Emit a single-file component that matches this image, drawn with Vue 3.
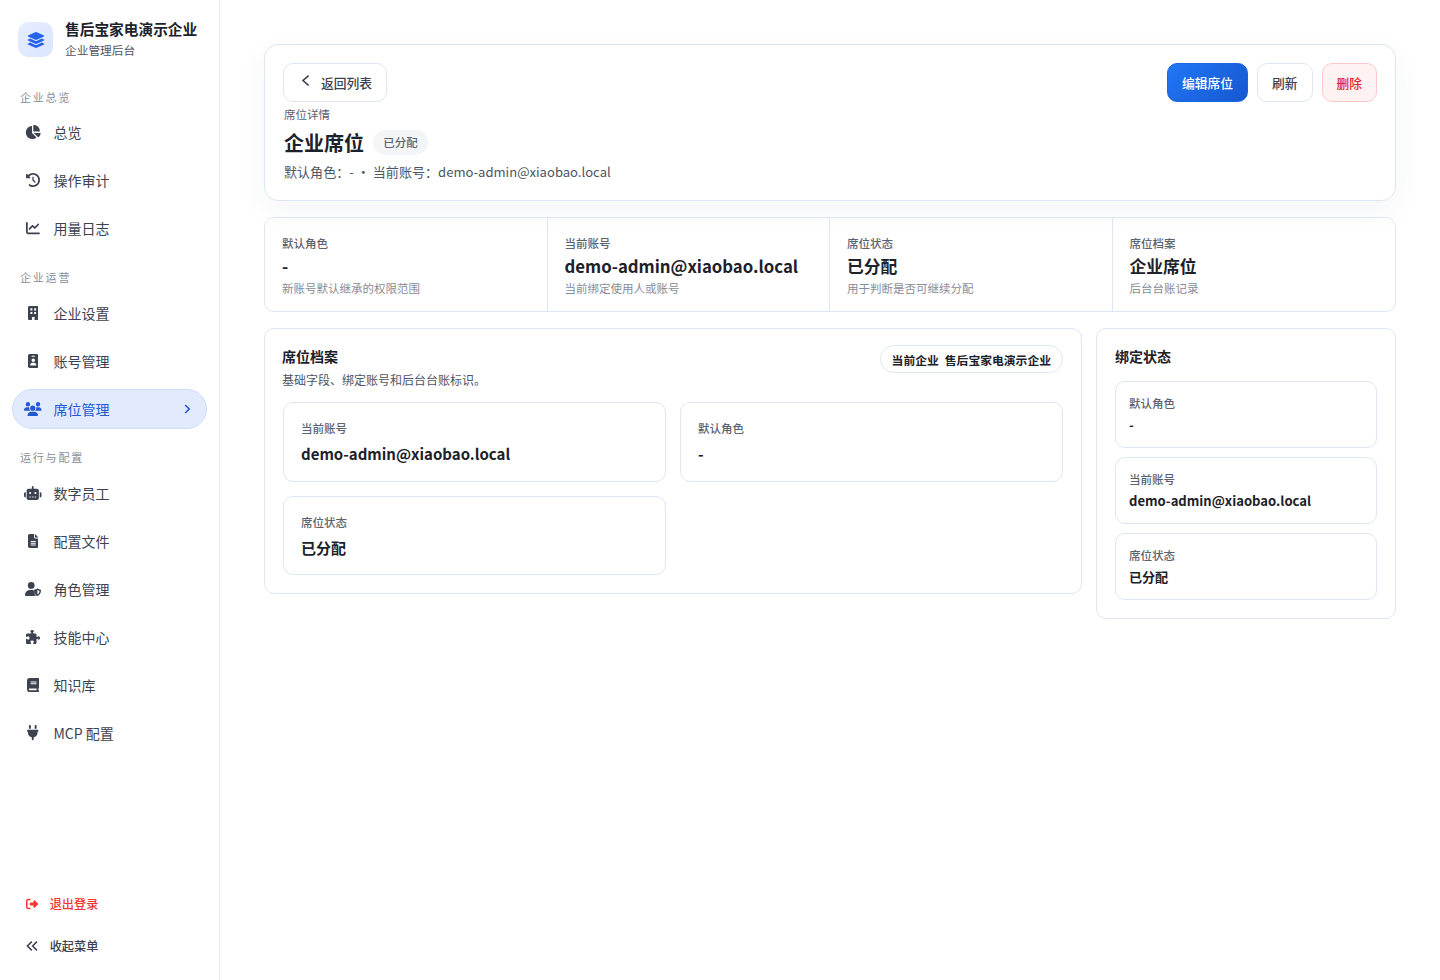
<template>
  <div class="layout">
    <aside class="sidebar">
      <div class="brand">
        <div class="brand-logo">
          <svg viewBox="0 0 576 512" class="logo-icon"><path :d="icons.layers.d" /></svg>
        </div>
        <div>
          <div class="brand-name">售后宝家电演示企业</div>
          <div class="brand-sub">企业管理后台</div>
        </div>
      </div>

      <div v-for="group in groups" :key="group.label" class="nav-group">
        <div class="nav-label">{{ group.label }}</div>
        <div v-for="item in group.items" :key="item.text" class="nav-item" :class="{ active: item.active }">
          <span class="nav-icon">
            <svg :viewBox="item.icon.vb" :style="{ width: item.icon.w + 'px' }"><path :d="item.icon.d" /></svg>
          </span>
          <span class="nav-text">{{ item.text }}</span>
          <svg v-if="item.active" class="nav-arrow" viewBox="0 0 12 12"><path d="M4.2 2 8.2 6l-4 4" /></svg>
        </div>
      </div>

      <div class="side-foot">
        <div class="foot-item danger">
          <svg viewBox="0 0 512 512"><path :d="icons.signout.d" /></svg>
          <span>退出登录</span>
        </div>
        <div class="foot-item">
          <svg viewBox="0 0 12 14" class="double"><path d="M5.8 2.6 1.4 7l4.4 4.4M11 2.6 6.6 7l4.4 4.4" /></svg>
          <span>收起菜单</span>
        </div>
      </div>
    </aside>

    <main class="main">
      <section class="hero">
        <div class="hero-top">
          <button class="btn back">
            <svg viewBox="0 0 12 14"><path d="M8.6 1.7 3 6.5l5.6 4.8" /></svg>
            <span>返回列表</span>
          </button>
          <div class="actions">
            <button class="btn primary">编辑席位</button>
            <button class="btn">刷新</button>
            <button class="btn del">删除</button>
          </div>
        </div>
        <div class="eyebrow">席位详情</div>
        <div class="title-row">
          <h1>企业席位</h1>
          <span class="badge">已分配</span>
        </div>
        <p class="hero-sub">默认角色：- · 当前账号：demo-admin@xiaobao.local</p>
      </section>

      <section class="stats">
        <div v-for="s in stats" :key="s.label" class="stat">
          <div class="stat-label">{{ s.label }}</div>
          <div class="stat-value">{{ s.value }}</div>
          <div class="stat-note">{{ s.note }}</div>
        </div>
      </section>

      <div class="panels">
        <section class="panel left">
          <div class="panel-head">
            <div class="head-text">
              <h2>席位档案</h2>
              <p>基础字段、绑定账号和后台台账标识。</p>
            </div>
            <span class="pill"><span>当前企业</span><span>售后宝家电演示企业</span></span>
          </div>
          <div class="field-grid">
            <div v-for="f in profile" :key="f.label" class="field">
              <div class="field-label">{{ f.label }}</div>
              <div class="field-value">{{ f.value }}</div>
            </div>
          </div>
        </section>

        <section class="panel right">
          <h2>绑定状态</h2>
          <div class="bind-list">
            <div v-for="b in binding" :key="b.label" class="bind">
              <div class="field-label">{{ b.label }}</div>
              <div class="bind-value">{{ b.value }}</div>
            </div>
          </div>
        </section>
      </div>
    </main>
  </div>
</template>

<script setup>
const icons = {
  layers: { vb: '0 0 576 512', w: 16, d: 'M264.5 5.2c14.9-6.9 32.1-6.9 47 0l218.6 101c8.5 3.9 13.9 12.4 13.9 21.8s-5.4 17.9-13.9 21.8l-218.6 101c-14.9 6.9-32.1 6.9-47 0L45.9 149.8C37.4 145.8 32 137.3 32 128s5.4-17.9 13.9-21.8L264.5 5.2zM476.9 209.6l53.2 24.6c8.5 3.9 13.9 12.4 13.9 21.8s-5.4 17.9-13.9 21.8l-218.6 101c-14.9 6.9-32.1 6.9-47 0L45.9 277.8C37.4 273.8 32 265.3 32 256s5.4-17.9 13.9-21.8l53.2-24.6 152 70.2c23.4 10.8 50.4 10.8 73.8 0l152-70.2zm-152 198.2l152-70.2 53.2 24.6c8.5 3.9 13.9 12.4 13.9 21.8s-5.4 17.9-13.9 21.8l-218.6 101c-14.9 6.9-32.1 6.9-47 0L45.9 405.8C37.4 401.8 32 393.3 32 384s5.4-17.9 13.9-21.8l53.2-24.6 152 70.2c23.4 10.8 50.4 10.8 73.8 0z' },
  pie: { vb: '0 0 576 512', w: 15.75, d: 'M304 240V16.6c0-9 7-16.6 16-16.6C443.7 0 544 100.3 544 224c0 9-7.6 16-16.6 16H304zM32 272C32 150.7 122.1 50.3 239 34.3c9.2-1.3 17 6.1 17 15.4V288L412.5 444.5c6.7 6.7 6.2 17.7-1.5 23.1C371.8 495.6 323.8 512 272 512C139.5 512 32 404.6 32 272zm526.4 16c9.3 0 16.6 7.8 15.4 17c-7.7 55.9-34.6 105.6-73.9 142.3c-6 5.6-15.4 5.2-21.2-.7L320 288H558.4z' },
  history: { vb: '0 0 512 512', w: 14, d: 'M75 75L41 41C25.9 25.9 0 36.6 0 57.9V168c0 13.3 10.7 24 24 24H134.1c21.4 0 32.1-25.9 17-41l-30.8-30.8C155 85.5 203 64 256 64c106 0 192 86 192 192s-86 192-192 192c-40.8 0-78.6-12.7-109.7-34.4c-14.5-10.1-34.4-6.6-44.6 7.9s-6.6 34.4 7.9 44.6C151.2 495 201.7 512 256 512c141.4 0 256-114.6 256-256S397.4 0 256 0C185.3 0 121.3 28.7 75 75zm181 53c-13.3 0-24 10.7-24 24V256c0 6.4 2.5 12.5 7 17l72 72c9.4 9.4 24.6 9.4 33.9 0s9.4-24.6 0-33.9l-65-65V152c0-13.3-10.7-24-24-24z' },
  line: { vb: '0 0 512 512', w: 14, d: 'M64 64c0-17.7-14.3-32-32-32S0 46.3 0 64V400c0 44.2 35.8 80 80 80H480c17.7 0 32-14.3 32-32s-14.3-32-32-32H80c-8.8 0-16-7.2-16-16V64zm406.6 86.6c12.5-12.5 12.5-32.8 0-45.3s-32.8-12.5-45.3 0L320 210.7l-57.4-57.4c-12.5-12.5-32.8-12.5-45.3 0l-112 112c-12.5 12.5-12.5 32.8 0 45.3s32.8 12.5 45.3 0L240 221.3l57.4 57.4c12.5 12.5 32.8 12.5 45.3 0l128-128z' },
  building: { vb: '0 0 384 512', w: 10.5, d: 'M48 0C21.5 0 0 21.5 0 48V464c0 26.5 21.5 48 48 48h96V400h96V512h96c26.5 0 48-21.5 48-48V48c0-26.5-21.5-48-48-48H48zM88 80h72v80H88zM224 80h72v80H224zM88 216h72v80H88zM224 216h72v80H224z' },
  badge: { vb: '0 0 384 512', w: 10.5, d: 'M64 0C28.7 0 0 28.7 0 64V448c0 35.3 28.7 64 64 64H320c35.3 0 64-28.7 64-64V64c0-35.3-28.7-64-64-64H64zm96 320h64c44.2 0 80 35.8 80 80c0 8.8-7.2 16-16 16H96c-8.8 0-16-7.2-16-16c0-44.2 35.8-80 80-80zm-32-96a64 64 0 1 1 128 0 64 64 0 1 1 -128 0zM144 64h96c8.8 0 16 7.2 16 16s-7.2 16-16 16H144c-8.8 0-16-7.2-16-16s7.2-16 16-16z' },
  users: { vb: '0 0 640 512', w: 17.5, d: 'M144 0a80 80 0 1 1 0 160A80 80 0 1 1 144 0zM512 0a80 80 0 1 1 0 160A80 80 0 1 1 512 0zM0 298.7C0 239.8 47.8 192 106.7 192h42.7c15.9 0 31 3.5 44.6 9.7c-1.3 7.2-1.9 14.7-1.9 22.3c0 38.2 16.8 72.5 43.3 96c-.2 0-.4 0-.7 0H21.3C9.6 320 0 310.4 0 298.7zM405.3 320c-.2 0-.4 0-.7 0c26.6-23.5 43.3-57.8 43.3-96c0-7.6-.7-15-1.9-22.3c13.6-6.3 28.7-9.7 44.6-9.7h42.7C592.2 192 640 239.8 640 298.7c0 11.8-9.6 21.3-21.3 21.3H405.3zM224 224a96 96 0 1 1 192 0 96 96 0 1 1 -192 0zM128 485.3C128 411.7 187.7 352 261.3 352H378.7C452.3 352 512 411.7 512 485.3c0 14.7-11.9 26.7-26.7 26.7H154.7c-14.7 0-26.7-11.9-26.7-26.7z' },
  robot: { vb: '0 0 640 512', w: 17.5, d: 'M320 0c17.7 0 32 14.3 32 32V96H472c39.8 0 72 32.2 72 72V440c0 39.8-32.2 72-72 72H168c-39.8 0-72-32.2-72-72V168c0-39.8 32.2-72 72-72H288V32c0-17.7 14.3-32 32-32zM208 384c-8.8 0-16 7.2-16 16s7.2 16 16 16h32c8.8 0 16-7.2 16-16s-7.2-16-16-16H208zm96 0c-8.8 0-16 7.2-16 16s7.2 16 16 16h32c8.8 0 16-7.2 16-16s-7.2-16-16-16H304zm96 0c-8.8 0-16 7.2-16 16s7.2 16 16 16h32c8.8 0 16-7.2 16-16s-7.2-16-16-16H400zM264 256a40 40 0 1 0 -80 0 40 40 0 1 0 80 0zm152 40a40 40 0 1 0 0-80 40 40 0 1 0 0 80zM48 224H64V416H48c-26.5 0-48-21.5-48-48V272c0-26.5 21.5-48 48-48zm544 0c26.5 0 48 21.5 48 48v96c0 26.5-21.5 48-48 48H576V224h16z' },
  file: { vb: '0 0 384 512', w: 10.5, d: 'M64 0C28.7 0 0 28.7 0 64V448c0 35.3 28.7 64 64 64H320c35.3 0 64-28.7 64-64V160H256c-17.7 0-32-14.3-32-32V0H64zM256 0V128H384L256 0zM112 256H272c8.8 0 16 7.2 16 16s-7.2 16-16 16H112c-8.8 0-16-7.2-16-16s7.2-16 16-16zm0 64H272c8.8 0 16 7.2 16 16s-7.2 16-16 16H112c-8.8 0-16-7.2-16-16s7.2-16 16-16zm0 64H272c8.8 0 16 7.2 16 16s-7.2 16-16 16H112c-8.8 0-16-7.2-16-16s7.2-16 16-16z' },
  shield: { vb: '0 0 16 14', w: 16, d: 'M6.2 0a3.4 3.4 0 1 1 0 6.8 3.4 3.4 0 0 1 0-6.8zM4.8 8h2.6c.6 0 1 .1 1.4.2.1 2.2.8 4.2 2 5.8H.8c-.5 0-.8-.3-.8-.8C0 10.4 2 8 4.8 8zM12.4 6.6l3.2 1.2c.3.1.4.3.4.6 0 2.8-1.8 4.8-3.3 5.5-.2.1-.4.1-.6 0C10.6 13.2 9 11.2 9 8.4c0-.3.1-.5.4-.6l3-1.2zm0 1.5v4.5c.9-.5 2-1.700 2.100-3.600z' },
  puzzle: { vb: '0 0 512 512', w: 14, d: 'M192 104.8c0-9.2-5.8-17.3-13.2-22.8C167.2 73.3 160 61.3 160 48c0-26.5 28.7-48 64-48s64 21.5 64 48c0 13.3-7.2 25.3-18.8 34c-7.4 5.5-13.2 13.6-13.2 22.8c0 12.8 10.4 23.2 23.2 23.2H336c26.5 0 48 21.5 48 48v56.8c0 12.8 10.4 23.2 23.2 23.2c9.2 0 17.3-5.8 22.8-13.2c8.7-11.6 20.7-18.8 34-18.8c26.5 0 48 28.7 48 64s-21.5 64-48 64c-13.3 0-25.3-7.2-34-18.8c-5.5-7.4-13.6-13.2-22.8-13.2c-12.8 0-23.2 10.4-23.2 23.2V464c0 26.5-21.5 48-48 48H279.2c-12.8 0-23.2-10.4-23.2-23.2c0-9.2 5.8-17.3 13.2-22.8c11.6-8.7 18.8-20.7 18.8-34c0-26.5-28.7-48-64-48s-64 21.5-64 48c0 13.3 7.2 25.3 18.8 34c7.4 5.5 13.2 13.6 13.2 22.8c0 12.8-10.4 23.2-23.2 23.2H48c-26.5 0-48-21.5-48-48V343.2C0 330.4 10.4 320 23.2 320c9.2 0 17.3 5.8 22.8 13.2C54.7 344.8 66.7 352 80 352c26.5 0 48-28.7 48-64s-21.5-64-48-64c-13.3 0-25.3 7.2-34 18.8C40.5 250.2 32.4 256 23.2 256C10.4 256 0 245.6 0 232.8V176c0-26.5 21.5-48 48-48H168.8c12.8 0 23.2-10.4 23.2-23.2z' },
  book: { vb: '0 0 448 512', w: 12.25, d: 'M96 0C43 0 0 43 0 96V416c0 53 43 96 96 96H384h32c17.7 0 32-14.3 32-32s-14.3-32-32-32V384c17.7 0 32-14.3 32-32V32c0-17.7-14.3-32-32-32H384 96zm0 384H352v64H96c-17.7 0-32-14.3-32-32s14.3-32 32-32zm32-240c0-8.8 7.2-16 16-16H336c8.8 0 16 7.2 16 16s-7.2 16-16 16H144c-8.8 0-16-7.2-16-16zm16 48H336c8.8 0 16 7.2 16 16s-7.2 16-16 16H144c-8.8 0-16-7.2-16-16s7.2-16 16-16z' },
  plug: { vb: '0 0 384 512', w: 11.5, d: 'M96 0C78.3 0 64 14.3 64 32v96h64V32c0-17.7-14.3-32-32-32zM288 0c-17.7 0-32 14.3-32 32v96h64V32c0-17.7-14.3-32-32-32zM32 160c-17.7 0-32 14.3-32 32s14.3 32 32 32v32c0 77.4 55 142 128 156.8V480c0 17.7 14.3 32 32 32s32-14.3 32-32V412.8C297 398 352 333.4 352 256V224c17.7 0 32-14.3 32-32s-14.3-32-32-32H32z' },
  signout: { vb: '0 0 512 512', w: 12, d: 'M377.9 105.9L500.7 228.7c7.2 7.2 11.3 17.1 11.3 27.3s-4.1 20.1-11.3 27.3L377.9 406.1c-6.4 6.4-15 9.9-24 9.9c-18.7 0-33.9-15.2-33.9-33.9l0-62.1-128 0c-17.7 0-32-14.3-32-32l0-64c0-17.7 14.3-32 32-32l128 0 0-62.1c0-18.7 15.2-33.9 33.9-33.9c9 0 17.6 3.6 24 9.9zM160 96L96 96c-17.7 0-32 14.3-32 32l0 256c0 17.7 14.3 32 32 32l64 0c17.7 0 32 14.3 32 32s-14.3 32-32 32l-64 0c-53 0-96-43-96-96L0 128C0 75 43 32 96 32l64 0c17.7 0 32 14.3 32 32s-14.3 32-32 32z' }
}

const groups = [
  {
    label: '企业总览',
    items: [
      { text: '总览', icon: icons.pie },
      { text: '操作审计', icon: icons.history },
      { text: '用量日志', icon: icons.line }
    ]
  },
  {
    label: '企业运营',
    items: [
      { text: '企业设置', icon: icons.building },
      { text: '账号管理', icon: icons.badge },
      { text: '席位管理', icon: icons.users, active: true }
    ]
  },
  {
    label: '运行与配置',
    items: [
      { text: '数字员工', icon: icons.robot },
      { text: '配置文件', icon: icons.file },
      { text: '角色管理', icon: icons.shield },
      { text: '技能中心', icon: icons.puzzle },
      { text: '知识库', icon: icons.book },
      { text: 'MCP 配置', icon: icons.plug }
    ]
  }
]

const stats = [
  { label: '默认角色', value: '-', note: '新账号默认继承的权限范围' },
  { label: '当前账号', value: 'demo-admin@xiaobao.local', note: '当前绑定使用人或账号' },
  { label: '席位状态', value: '已分配', note: '用于判断是否可继续分配' },
  { label: '席位档案', value: '企业席位', note: '后台台账记录' }
]

const profile = [
  { label: '当前账号', value: 'demo-admin@xiaobao.local' },
  { label: '默认角色', value: '-' },
  { label: '席位状态', value: '已分配' }
]

const binding = [
  { label: '默认角色', value: '-' },
  { label: '当前账号', value: 'demo-admin@xiaobao.local' },
  { label: '席位状态', value: '已分配' }
]
</script>

<style>
body {
  background: #fff;
}
</style>

<style scoped>
.layout {
  display: flex;
  min-height: 980px;
  font-family: "Noto Sans CJK SC", "Noto Sans", sans-serif;
  color: #1d2129;
}
.sidebar {
  width: 220px;
  height: 980px;
  box-sizing: border-box;
  flex-shrink: 0;
  border-right: 1px solid #e8ebf2;
  padding: 19px 12px 20px;
  display: flex;
  flex-direction: column;
}
.brand {
  display: flex;
  gap: 12px;
  padding-left: 6px;
  margin-bottom: 30px;
  align-items: flex-start;
}
.brand-logo {
  width: 35px;
  height: 35px;
  margin-top: 3px;
  border-radius: 10px;
  background: linear-gradient(135deg, #e6edff, #d9e5ff);
  display: flex;
  align-items: center;
  justify-content: center;
}
.logo-icon {
  width: 18px;
  fill: #2563eb;
}
.brand-name {
  font-size: 14.7px;
  font-weight: 600;
  line-height: 20px;
  color: #1d2129;
}
.brand-sub {
  font-size: 11.7px;
  line-height: 18px;
  margin-top: 2px;
  color: #4e5563;
}
.nav-group {
  margin-bottom: 20px;
}
.brand + .nav-group {
  margin-bottom: 21px;
}
.nav-label {
  font-size: 11px;
  line-height: 16px;
  letter-spacing: 1.8px;
  color: #868d99;
  padding-left: 8px;
  margin-bottom: 8px;
}
.brand + .nav-group .nav-label {
  margin-bottom: 7px;
}
.nav-item {
  height: 40px;
  margin-bottom: 8px;
  box-sizing: border-box;
  border: 1px solid transparent;
  border-radius: 20px;
  padding: 0 13px 0 11px;
  display: flex;
  align-items: center;
  gap: 11.5px;
  font-size: 14px;
  color: #3c4250;
}
.nav-item:last-child {
  margin-bottom: 0;
}
.nav-icon {
  width: 18px;
  display: flex;
  justify-content: center;
  flex-shrink: 0;
}
.nav-icon svg {
  display: block;
  fill: #3c4250;
  fill-rule: evenodd;
}
.nav-text {
  flex: 1;
}
.nav-item.active {
  background: #e2eafd;
  border-color: #cddcfa;
  color: #2257d6;
}
.nav-item.active .nav-icon svg {
  fill: #2257d6;
}
.nav-arrow {
  width: 12px;
  height: 12px;
  fill: none;
  stroke: #2257d6;
  stroke-width: 1.6;
}
.side-foot {
  margin-top: auto;
  display: flex;
  flex-direction: column;
  gap: 14px;
}
.foot-item {
  height: 28px;
  display: flex;
  align-items: center;
  gap: 11.7px;
  padding-left: 14px;
  font-size: 12.2px;
  font-weight: 500;
  color: #3c4250;
}
.foot-item svg {
  width: 12px;
  fill: #3c4250;
}
.foot-item.danger {
  color: #f5362e;
}
.foot-item.danger svg {
  fill: #f5362e;
}
.foot-item svg.double {
  fill: none;
  stroke: #3c4250;
  stroke-width: 1.5;
}
.main {
  flex: 1;
  padding: 44px 44px 0;
  min-width: 0;
}
.hero {
  border: 1px solid #dfe6f3;
  border-radius: 14px;
  padding: 18px 18px 16px;
  height: 157px;
  box-sizing: border-box;
  box-shadow: 0 10px 30px rgba(30, 50, 90, 0.05);
  background: #fff;
}
.hero-top {
  display: flex;
  justify-content: space-between;
}
.btn {
  height: 39px;
  box-sizing: border-box;
  border: 1px solid #dfe6f3;
  border-radius: 10px;
  background: #fff;
  padding: 0 14px;
  font-family: inherit;
  font-size: 12.75px;
  font-weight: 500;
  color: #3c4250;
  display: inline-flex;
  align-items: center;
  white-space: nowrap;
}
.back {
  width: 104px;
  gap: 9px;
  padding: 0 0 0 16px;
}
.back svg {
  width: 12px;
  height: 14px;
  fill: none;
  stroke: #3c4250;
  stroke-width: 1.6;
  margin-top: -3px;
}
.actions {
  display: flex;
  gap: 9px;
}
.primary {
  background: linear-gradient(135deg, #2277f6, #1657d0);
  border-color: #1a66e0;
  color: #fff;
}
.del {
  background: #fef2f2;
  border-color: #fbc9c9;
  color: #e5222a;
}
.eyebrow {
  font-size: 11.5px;
  line-height: 16px;
  margin: 4px 0 0 1px;
  color: #5c6270;
}
.title-row {
  display: flex;
  align-items: center;
  gap: 9px;
  margin: 8px 0 0 1px;
}
h1 {
  margin: 0;
  font-size: 20px;
  line-height: 26px;
  font-weight: 700;
  color: #1d2129;
}
.badge {
  height: 25px;
  line-height: 25px;
  padding: 0 10.25px;
  margin-top: -1px;
  border-radius: 13px;
  background: #f4f5f7;
  font-size: 11.5px;
  font-weight: 500;
  color: #5c6270;
}
.hero-sub {
  margin: 6px 0 0 1px;
  font-size: 13.07px;
  line-height: 20px;
  color: #4e5563;
}
.stats {
  margin-top: 16px;
  height: 95px;
  box-sizing: border-box;
  border: 1px solid #dfe6f3;
  border-radius: 10px;
  display: grid;
  grid-template-columns: repeat(4, 1fr);
}
.stat {
  padding: 16px 8px 0 17px;
  border-right: 1px solid #dfe6f3;
}
.stat:last-child {
  border-right: 0;
}
.stat-label {
  font-size: 11.5px;
  line-height: 18px;
  font-weight: 500;
  color: #5c6270;
}
.stat-value {
  font-size: 16.75px;
  line-height: 24px;
  font-weight: 700;
  color: #1d2129;
  white-space: nowrap;
  margin-top: 2px;
}
.stat-note {
  font-size: 11.5px;
  line-height: 18px;
  margin-top: 1px;
  color: #868d99;
}
.panels {
  margin-top: 16px;
  display: flex;
  gap: 14px;
  align-items: flex-start;
}
.panel {
  border: 1px solid #dfe6f3;
  border-radius: 10px;
  box-sizing: border-box;
}
.left {
  flex: 1;
  padding: 16px 18px 18px;
}
.right {
  width: 300px;
  flex-shrink: 0;
  padding: 16px 18px 18px;
}
.panel-head {
  display: flex;
  justify-content: space-between;
  align-items: flex-start;
}
.head-text {
  margin-left: -1px;
}
h2 {
  margin: 0;
  font-size: 14px;
  line-height: 22px;
  font-weight: 700;
  color: #1d2129;
}
.panel-head p {
  margin: 3px 0 0;
  font-size: 12px;
  line-height: 20px;
  color: #4e5563;
}
.pill {
  height: 28px;
  box-sizing: border-box;
  border: 1px solid #dfe6f3;
  border-radius: 14px;
  padding: 0 11px;
  display: flex;
  align-items: center;
  gap: 6px;
  font-size: 11.8px;
  font-weight: 600;
  color: #1d2129;
  white-space: nowrap;
}
.field-grid {
  margin-top: 12px;
  display: grid;
  grid-template-columns: 1fr 1fr;
  gap: 14px;
}
.field {
  height: 79.5px;
  box-sizing: border-box;
  border: 1px solid #dfe6f3;
  border-radius: 10px;
  padding: 16px 17px 0;
}
.field-label {
  font-size: 11.5px;
  line-height: 18px;
  font-weight: 500;
  color: #5c6270;
}
.field-value {
  font-size: 15px;
  line-height: 22px;
  font-weight: 600;
  margin-top: 6px;
  color: #1d2129;
}
.bind-list {
  margin-top: 14px;
  display: flex;
  flex-direction: column;
  gap: 9px;
}
.bind {
  height: 67px;
  box-sizing: border-box;
  border: 1px solid #dfe6f3;
  border-radius: 10px;
  padding: 12px 13px 0;
}
.bind-value {
  font-size: 13.07px;
  line-height: 20px;
  font-weight: 600;
  margin-top: 3px;
  color: #1d2129;
}
</style>
